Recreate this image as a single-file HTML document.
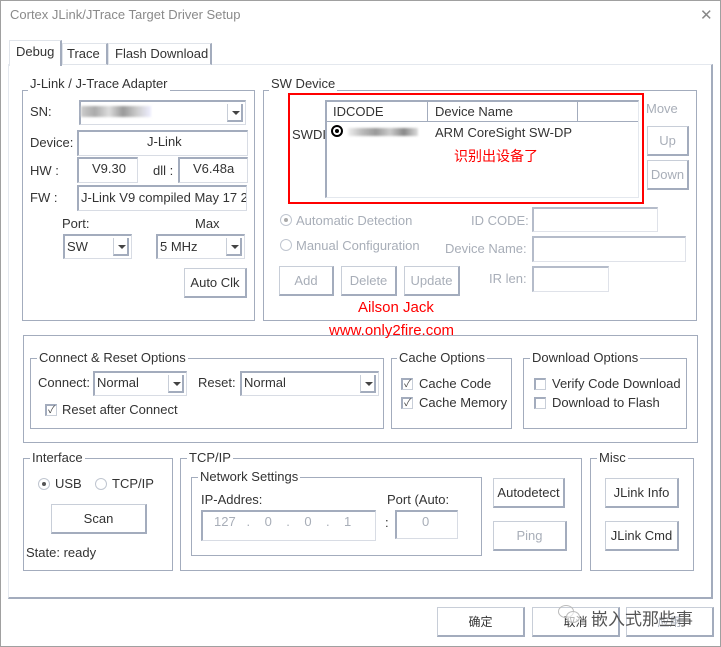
<!DOCTYPE html>
<html><head><meta charset="utf-8"><style>
*{box-sizing:border-box;margin:0;padding:0}
body{width:721px;height:647px;background:#fff;position:relative;overflow:hidden;font-family:"Liberation Sans","Noto Sans CJK SC",sans-serif;font-size:13px;color:#333}
.a{position:absolute;white-space:nowrap}
.g{position:absolute;border:1px solid #a3acbd}
.gl{position:absolute;background:#fff;padding:0 2px;white-space:nowrap;color:#333}
.b{position:absolute;border:1px solid #c8ced8;border-right:2px solid #a3acbd;border-bottom:2px solid #a3acbd;background:#fff;text-align:center;color:#333}
.e{position:absolute;border:1px solid #d8dce4;border-top:2px solid #a3acbd;border-left:2px solid #a3acbd;background:#fff}
.dis{color:#a8aeb8}
.dd{position:absolute;right:2px;top:2px;bottom:2px;width:16px;border-left:1px solid #c8ced8;border-right:2px solid #a3acbd;border-bottom:2px solid #a3acbd}
.dd:after{content:"";position:absolute;left:4px;top:7px;border:4px solid transparent;border-top:4px solid #444}
.cb{position:absolute;width:12px;height:12px;border:1px solid #c8ced8;border-top:2px solid #a3acbd;border-left:2px solid #a3acbd;font-size:10px;line-height:9px;text-align:center;color:#444}
.rd{position:absolute;width:12px;height:12px;border-radius:50%;border:1px solid #c0c6d0}
.red{color:#f00}
</style></head><body>
<div class="a" style="left:0;top:0;width:721px;height:647px;border:1px solid #a0a0a0"></div>
<div class="a" style="left:10px;top:7px;color:#8a8a8a;font-size:13px">Cortex JLink/JTrace Target Driver Setup</div>
<div class="a" style="left:700px;top:6px;font-size:15px;color:#888">✕</div>

<!-- tab panel -->
<div class="a" style="left:8px;top:64px;width:705px;height:535px;border:1px solid #e4e8ee;border-right:2px solid #a3acbd;border-bottom:2px solid #a3acbd"></div>
<div class="a" style="left:9px;top:40px;width:53px;height:26px;background:#fff;border:1px solid #e0e4ea;border-bottom:none;border-right:2px solid #a3acbd"></div>
<div class="a" style="left:16px;top:44px">Debug</div>
<div class="a" style="left:62px;top:43px;width:46px;height:22px;border:1px solid #e0e4ea;border-right:2px solid #a3acbd"></div>
<div class="a" style="left:67px;top:46px">Trace</div>
<div class="a" style="left:108px;top:43px;width:104px;height:22px;border:1px solid #e0e4ea;border-right:2px solid #a3acbd"></div>
<div class="a" style="left:115px;top:46px">Flash Download</div>

<!-- J-Link group -->
<div class="g" style="left:22px;top:90px;width:233px;height:231px"></div>
<div class="gl" style="left:28px;top:76px">J-Link / J-Trace Adapter</div>
<div class="a" style="left:30px;top:104px">SN:</div>
<div class="e" style="left:79px;top:100px;width:167px;height:25px"><div style="position:absolute;left:0;top:4px;width:70px;height:11px;background:linear-gradient(90deg,#ccc,#aaa,#ddd,#999,#ccc,#eef);filter:blur(1px)"></div><div class="dd"></div></div>
<div class="a" style="left:30px;top:135px">Device:</div>
<div class="e" style="left:77px;top:130px;width:171px;height:26px;border-bottom:1px solid #d8dce4"></div>
<div class="a" style="left:147px;top:134px">J-Link</div>
<div class="a" style="left:30px;top:163px">HW :</div>
<div class="e" style="left:77px;top:157px;width:61px;height:26px"></div>
<div class="a" style="left:92px;top:161px">V9.30</div>
<div class="a" style="left:153px;top:163px">dll :</div>
<div class="e" style="left:178px;top:157px;width:70px;height:26px"></div>
<div class="a" style="left:193px;top:161px">V6.48a</div>
<div class="a" style="left:30px;top:190px">FW :</div>
<div class="e" style="left:77px;top:185px;width:170px;height:26px;overflow:hidden"><span style="position:absolute;left:2px;top:3px;white-space:nowrap">J-Link V9 compiled May 17 2</span></div>
<div class="a" style="left:62px;top:216px">Port:</div>
<div class="a" style="left:195px;top:216px">Max</div>
<div class="e" style="left:63px;top:234px;width:69px;height:25px"><span style="position:absolute;left:2px;top:3px">SW</span><div class="dd"></div></div>
<div class="e" style="left:156px;top:234px;width:89px;height:25px"><span style="position:absolute;left:2px;top:3px">5 MHz</span><div class="dd"></div></div>
<div class="b" style="left:184px;top:268px;width:63px;height:30px;line-height:27px">Auto Clk</div>

<!-- SW Device -->
<div class="g" style="left:263px;top:90px;width:434px;height:231px"></div>
<div class="gl" style="left:269px;top:76px">SW Device</div>
<div class="a" style="left:292px;top:127px">SWDI</div>
<div class="a" style="left:325px;top:100px;width:314px;height:98px;border:1px solid #e4e8ee;border-left:2px solid #a3acbd;border-top:2px solid #a3acbd"></div>
<div class="a" style="left:327px;top:102px;width:311px;height:20px;border-bottom:1px solid #a3acbd"></div>
<div class="a" style="left:427px;top:102px;width:1px;height:20px;background:#a3acbd"></div>
<div class="a" style="left:577px;top:102px;width:1px;height:20px;background:#a3acbd"></div>
<div class="a" style="left:333px;top:104px">IDCODE</div>
<div class="a" style="left:435px;top:104px">Device Name</div>
<div class="a" style="left:331px;top:125px;width:12px;height:12px;border:2px solid #000;border-radius:50%"></div>
<div class="a" style="left:335px;top:129px;width:4px;height:4px;background:#000;border-radius:50%"></div>
<div class="a" style="left:348px;top:128px;width:70px;height:8px;background:linear-gradient(90deg,#eee,#bbb,#999,#ccc,#888,#ddd);filter:blur(1px)"></div>
<div class="a" style="left:435px;top:125px">ARM CoreSight SW-DP</div>
<div class="a red" style="left:454px;top:146px;font-size:14px">识别出设备了</div>
<div class="a" style="left:288px;top:93px;width:356px;height:111px;border:2px solid #f00"></div>
<div class="a dis" style="left:646px;top:101px">Move</div>
<div class="b dis" style="left:647px;top:126px;width:42px;height:30px;line-height:28px">Up</div>
<div class="b dis" style="left:647px;top:160px;width:42px;height:30px;line-height:28px">Down</div>
<div class="rd" style="left:280px;top:214px"></div><div class="a" style="left:284px;top:218px;width:4px;height:4px;border-radius:50%;background:#aaa"></div>
<div class="a dis" style="left:296px;top:213px">Automatic Detection</div>
<div class="rd" style="left:280px;top:239px"></div>
<div class="a dis" style="left:296px;top:238px">Manual Configuration</div>
<div class="a dis" style="left:471px;top:213px">ID CODE:</div>
<div class="e" style="left:532px;top:207px;width:126px;height:25px;opacity:.8"></div>
<div class="a dis" style="left:445px;top:241px">Device Name:</div>
<div class="e" style="left:532px;top:236px;width:154px;height:26px;opacity:.8"></div>
<div class="a dis" style="left:489px;top:271px">IR len:</div>
<div class="e" style="left:532px;top:266px;width:77px;height:26px;opacity:.8"></div>
<div class="b dis" style="left:279px;top:266px;width:55px;height:30px;line-height:28px">Add</div>
<div class="b dis" style="left:341px;top:266px;width:56px;height:30px;line-height:28px">Delete</div>
<div class="b dis" style="left:404px;top:266px;width:56px;height:30px;line-height:28px">Update</div>

<!-- options -->
<div class="g" style="left:23px;top:335px;width:675px;height:108px"></div>
<div class="a red" style="left:358px;top:299px;font-size:15px">Ailson Jack</div>
<div class="a red" style="left:329px;top:322px;font-size:15px">www.only2fire.com</div>
<div class="g" style="left:30px;top:358px;width:354px;height:71px"></div>
<div class="gl" style="left:37px;top:350px">Connect &amp; Reset Options</div>
<div class="a" style="left:38px;top:375px">Connect:</div>
<div class="e" style="left:93px;top:371px;width:94px;height:25px"><span style="position:absolute;left:2px;top:2px">Normal</span><div class="dd"></div></div>
<div class="a" style="left:198px;top:375px">Reset:</div>
<div class="e" style="left:240px;top:371px;width:139px;height:25px"><span style="position:absolute;left:2px;top:2px">Normal</span><div class="dd"></div></div>
<div class="cb" style="left:45px;top:404px">✓</div>
<div class="a" style="left:62px;top:402px">Reset after Connect</div>
<div class="g" style="left:391px;top:358px;width:121px;height:71px"></div>
<div class="gl" style="left:397px;top:350px">Cache Options</div>
<div class="cb" style="left:401px;top:378px">✓</div><div class="a" style="left:419px;top:376px">Cache Code</div>
<div class="cb" style="left:401px;top:397px">✓</div><div class="a" style="left:419px;top:395px">Cache Memory</div>
<div class="g" style="left:523px;top:358px;width:164px;height:71px"></div>
<div class="gl" style="left:530px;top:350px">Download Options</div>
<div class="cb" style="left:534px;top:378px"></div><div class="a" style="left:552px;top:376px">Verify Code Download</div>
<div class="cb" style="left:534px;top:397px"></div><div class="a" style="left:552px;top:395px">Download to Flash</div>

<!-- Interface -->
<div class="g" style="left:23px;top:458px;width:150px;height:113px"></div>
<div class="gl" style="left:30px;top:450px">Interface</div>
<div class="rd" style="left:38px;top:478px"></div><div class="a" style="left:42px;top:482px;width:4px;height:4px;border-radius:50%;background:#555"></div>
<div class="a" style="left:55px;top:476px">USB</div>
<div class="rd" style="left:95px;top:478px"></div>
<div class="a" style="left:112px;top:476px">TCP/IP</div>
<div class="b" style="left:51px;top:504px;width:96px;height:30px;line-height:28px">Scan</div>
<div class="a" style="left:26px;top:545px">State: ready</div>

<div class="g" style="left:180px;top:458px;width:402px;height:113px"></div>
<div class="gl" style="left:187px;top:450px">TCP/IP</div>
<div class="g" style="left:191px;top:477px;width:291px;height:79px"></div>
<div class="gl" style="left:198px;top:469px">Network Settings</div>
<div class="a" style="left:201px;top:492px">IP-Addres:</div>
<div class="a" style="left:387px;top:492px">Port (Auto:</div>
<div class="e" style="left:201px;top:510px;width:175px;height:31px"></div>
<div class="a dis" style="left:214px;top:514px">127&nbsp;&nbsp;&nbsp;.&nbsp;&nbsp;&nbsp;&nbsp;0&nbsp;&nbsp;&nbsp;&nbsp;.&nbsp;&nbsp;&nbsp;&nbsp;0&nbsp;&nbsp;&nbsp;&nbsp;.&nbsp;&nbsp;&nbsp;&nbsp;1</div>
<div class="a" style="left:385px;top:515px">:</div>
<div class="e" style="left:395px;top:510px;width:63px;height:29px"></div>
<div class="a dis" style="left:422px;top:514px">0</div>
<div class="b" style="left:493px;top:478px;width:72px;height:30px;line-height:28px">Autodetect</div>
<div class="b dis" style="left:493px;top:521px;width:74px;height:30px;line-height:28px">Ping</div>
<div class="g" style="left:590px;top:458px;width:104px;height:113px"></div>
<div class="gl" style="left:597px;top:450px">Misc</div>
<div class="b" style="left:605px;top:478px;width:74px;height:30px;line-height:28px">JLink Info</div>
<div class="b" style="left:605px;top:521px;width:74px;height:30px;line-height:28px">JLink Cmd</div>

<!-- bottom -->
<div class="b" style="left:437px;top:607px;width:88px;height:30px;line-height:28px;font-size:12px">确定</div>
<div class="b" style="left:532px;top:607px;width:88px;height:30px;line-height:28px;font-size:12px">取消</div>
<div class="b dis" style="left:626px;top:607px;width:88px;height:30px;line-height:28px;font-size:12px">应用</div>
<div class="a" style="left:558px;top:605px;width:16px;height:13px;border:1px solid #bbb;border-radius:50%"></div>
<div class="a" style="left:566px;top:611px;width:14px;height:12px;border:1px solid #bbb;border-radius:50%;background:rgba(255,255,255,.6)"></div>
<div class="a" style="left:591px;top:605px;font-size:17px;color:#555">嵌入式那些事</div>
</body></html>
